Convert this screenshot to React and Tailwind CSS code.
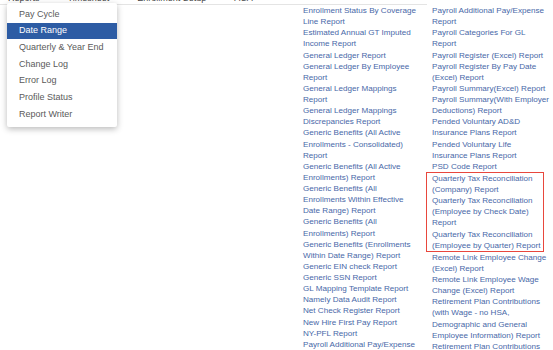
import { useState } from 'react';

const menu = ['Pay Cycle', 'Date Range', 'Quarterly & Year End', 'Change Log', 'Error Log', 'Profile Status', 'Report Writer'];

const left = [
  ['Enrollment Status By Coverage', 'Line Report'],
  ['Estimated Annual GT Imputed', 'Income Report'],
  ['General Ledger Report'],
  ['General Ledger By Employee', 'Report'],
  ['General Ledger Mappings', 'Report'],
  ['General Ledger Mappings', 'Discrepancies Report'],
  ['Generic Benefits (All Active', 'Enrollments - Consolidated)', 'Report'],
  ['Generic Benefits (All Active', 'Enrollments) Report'],
  ['Generic Benefits (All', 'Enrollments Within Effective', 'Date Range) Report'],
  ['Generic Benefits (All', 'Enrollments) Report'],
  ['Generic Benefits (Enrollments', 'Within Date Range) Report'],
  ['Generic EIN check Report'],
  ['Generic SSN Report'],
  ['GL Mapping Template Report'],
  ['Namely Data Audit Report'],
  ['Net Check Register Report'],
  ['New Hire First Pay Report'],
  ['NY-PFL Report'],
  ['Payroll Additional Pay/Expense'],
];

const right = [
  ['Payroll Additional Pay/Expense', 'Report'],
  ['Payroll Categories For GL', 'Report'],
  ['Payroll Register (Excel) Report'],
  ['Payroll Register By Pay Date', '(Excel) Report'],
  ['Payroll Summary(Excel) Report'],
  ['Payroll Summary(With Employer', 'Deductions) Report'],
  ['Pended Voluntary AD&D', 'Insurance Plans Report'],
  ['Pended Voluntary Life', 'Insurance Plans Report'],
  ['PSD Code Report'],
];

const boxed = [
  ['Quarterly Tax Reconciliation', '(Company) Report'],
  ['Quarterly Tax Reconciliation', '(Employee by Check Date)', 'Report'],
  ['Quarterly Tax Reconciliation', '(Employee by Quarter) Report'],
];

const rightRest = [
  ['Remote Link Employee Change', '(Excel) Report'],
  ['Remote Link Employee Wage', 'Change (Excel) Report'],
  ['Retirement Plan Contributions', '(with Wage - no HSA,', 'Demographic and General', 'Employee Information) Report'],
  ['Retirement Plan Contributions'],
];

const Link = ({ lines }) => (
  <a href="#" className="block text-[#4868a8] whitespace-nowrap">
    {lines.map((l, i) => <span key={i} className="block">{l}</span>)}
  </a>
);

export default function App() {
  const [active, setActive] = useState('Date Range');

  return (
    <div className="relative h-[350px] w-[553px] overflow-hidden bg-white font-['Liberation_Sans',Arial,sans-serif]">
      {/* top nav, mostly scrolled off */}
      <div className="-mt-[8px] flex h-[13px] w-[427px] gap-[28px] border-b border-[#e4e4e4] pl-[8px] text-[9px] leading-[12px] text-[#444]">
        <span>Reports</span>
        <span>Timesheet</span>
        <span>Enrollment Setup</span>
        <span>ACA</span>
      </div>

      <div className="flex pl-[303px] text-[8.1px] leading-[11.13px]">
        <div className="w-[129px]">
          {left.map((l, i) => <Link key={i} lines={l} />)}
        </div>
        <div>
          {right.map((l, i) => <Link key={i} lines={l} />)}
          <div className="-ml-[6px] w-[118px] border border-[#e8473d] pl-[5px]">
            {boxed.map((l, i) => <Link key={i} lines={l} />)}
          </div>
          {rightRest.map((l, i) => <Link key={i} lines={l} />)}
        </div>
      </div>

      {/* reports dropdown */}
      <div className="absolute left-[7px] top-[3px] w-[110px] rounded-[2px] bg-white pt-[3px] pb-[4px] shadow-[0_2px_6px_rgba(0,0,0,0.28)]">
        {menu.map(m => (
          <div
            key={m}
            onMouseEnter={() => setActive(m)}
            className={`flex h-[16.7px] items-center pl-[12px] text-[9px] ${active === m ? 'bg-[#2d5ca4] text-white' : 'text-[#5a5a5a]'}`}
          >
            {m}
          </div>
        ))}
      </div>
    </div>
  );
}
